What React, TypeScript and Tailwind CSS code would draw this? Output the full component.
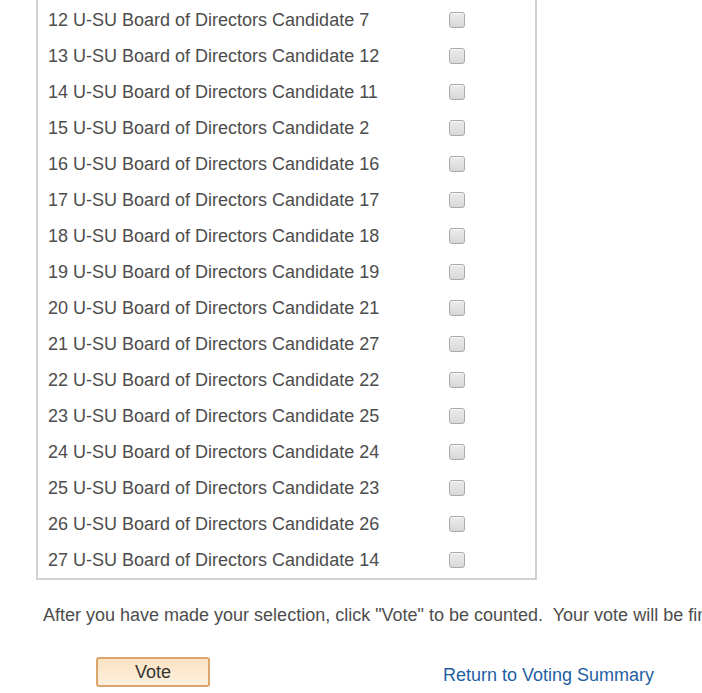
import React from "react";

const rows: [number, number][] = [
  [12, 7], [13, 12], [14, 11], [15, 2], [16, 16], [17, 17], [18, 18], [19, 19],
  [20, 21], [21, 27], [22, 22], [23, 25], [24, 24], [25, 23], [26, 26], [27, 14],
];

function Box() {
  return (
    <span className="block w-[16px] h-[16px] rounded-[3px] border border-[#a9a9a9] bg-gradient-to-b from-[#ececec] to-[#d8d8d8] shadow-[inset_0_1px_0_#f8f8f8]" />
  );
}

export default function App() {
  return (
    <div className="w-[702px] h-[693px] overflow-hidden bg-white text-[#4d4d4d] font-['Liberation_Sans',Arial,sans-serif]">
      <div className="ml-[36px] w-[501px] border-x-2 border-b-2 border-[#cfd2d6] pt-[2px]">
        {rows.map(([n, c]) => (
          <div key={n} className="flex items-center h-[36px]">
            <span className="pl-[10px] w-[411px] text-[18px] leading-none">
              {n} U-SU Board of Directors Candidate {c}
            </span>
            <Box />
          </div>
        ))}
      </div>
      <p className="mt-[25px] ml-[43px] whitespace-pre text-[18px] leading-[20px]">
        {'After you have made your selection, click "Vote" to be counted.  Your vote will be final once submitted.'}
      </p>
      <div className="flex items-center mt-[32px]">
        <button className="ml-[96px] w-[114px] h-[30px] rounded-[3px] border-2 border-[#dca56c] bg-gradient-to-b from-[#fbe3c3] to-[#fdf0dd] text-[18px] text-[#333] leading-none">
          Vote
        </button>
        <a className="ml-[233px] mt-[6px] text-[18px] text-[#1f5fa3] leading-none">Return to Voting Summary</a>
      </div>
    </div>
  );
}
